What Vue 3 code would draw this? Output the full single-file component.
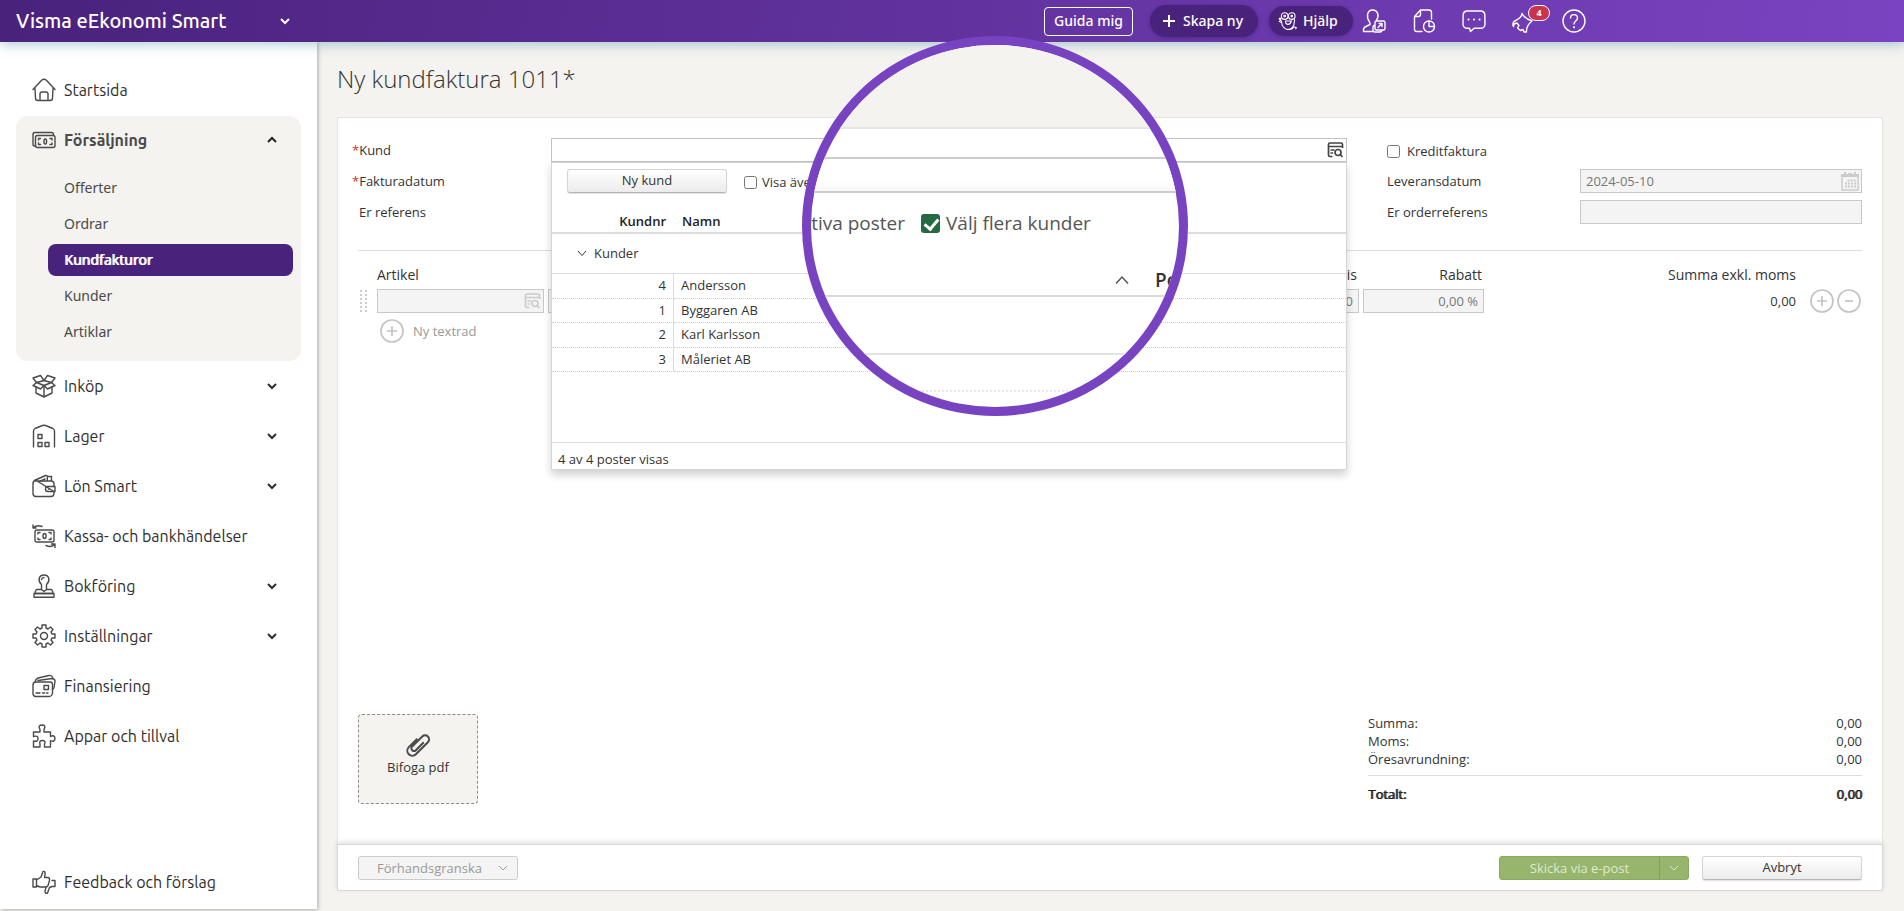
<script setup>
import { ref } from 'vue'

const subItems = ['Offerter', 'Ordrar', 'Kundfakturor', 'Kunder', 'Artiklar']
const activeItem = ref('Kundfakturor')

const menu = [
  { label: 'Inköp', icon: 'box', expandable: true },
  { label: 'Lager', icon: 'warehouse', expandable: true },
  { label: 'Lön Smart', icon: 'wallet', expandable: true },
  { label: 'Kassa- och bankhändelser', icon: 'cash', expandable: false },
  { label: 'Bokföring', icon: 'stamp', expandable: true },
  { label: 'Inställningar', icon: 'gear', expandable: true },
  { label: 'Finansiering', icon: 'cards', expandable: false },
  { label: 'Appar och tillval', icon: 'puzzle', expandable: false },
]

const icons = {
  home: ['M1 11.500 9.600 2.200Q12 .2 14.400 2.200L23 11.500M3 10.500 3.500 20Q3.500 22.500 6 22.500H18Q20.500 22.500 20.500 20L21 10.500', 'M8 22V16Q8 14 10 14H14Q16 14 16 16V22'],
  money: ['M3.500 18H2.500Q1 18 1 16.500V6.500Q1 4.500 3 4.500H19.500Q21.500 4.500 21.500 6.500', 'M5.500 7.500H21Q23 7.500 23 9.500V17.500Q23 19.500 21 19.500H5.500Q3.500 19.500 3.500 17.500V9.500Q3.500 7.500 5.500 7.500Z', 'M6.500 12V10.500H8.500M6.500 15V16.500H8.500M18 10.500H20V12M18 16.500H20V15', 'M13.300 11C11.500 11 11.500 16 13.300 16S15 11 13.300 11Z'],
  box: ['M4 12.500V19L12 23 20 19V12.500M12 12.500V23', 'M12 6.500 4.500 8.500 12 11.500 19.500 8.500Z', 'M4.500 8.500 1 11.500 8.500 15 12 11.500 15.500 15 23 11.500 19.500 8.500', 'M12 6.500 8.500 1.500 1 4 4.500 8.500M12 6.500 15.500 1.500 23 4 19.500 8.500'],
  warehouse: ['M1.500 23V7Q1.500 5.500 3 4.500L10.500 1.500Q12 1 13.500 1.500L21 4.500Q22.500 5.500 22.500 7V23', 'M6 10.500H10V14.500H6ZM6 18.500H10V22.500H6ZM13 18.500H17V22.500H13Z'],
  wallet: ['M3.500 7H19Q22 7 22 10V12.500M22 17.500V19Q22 22.500 19 22.500H4Q1 22.500 1 19.500V9.500Q1 7 3.500 6Z', 'M15.500 12.500H23V17.500H16Q13.500 17.500 13.500 15T15.500 12.500Z', 'M3.500 6 13.500 1.500Q15 1 15.300 2.500V6.500M16 2.500H19.500V6.500M8.500 6.800 13 5', 'M16.500 15H17'],
  cash: ['M5 6H20Q22 6 22 8V16Q22 18 20 18H5Q3 18 3 16V8Q3 6 5 6Z', 'M6 10V8.500H8M6 14V15.500H8M17 8.500H19V10M17 15.500H19V14', 'M12.500 9.500C10.500 9.500 10.500 14.500 12.500 14.500S14.500 9.500 12.500 9.500Z', 'M10 2.500Q5 .5 1.500 3.500M1 1V4H4', 'M14 21.500Q19 24 22.500 20.500M19.500 20H23V23.500'],
  stamp: ['M9.500 15.500V10.500C5.500 7 6.500 1 12 1S18.500 7 14.500 10.500V15.500', 'M9.500 15.500H5Q3.500 15.500 3 19.500H21Q20.500 15.500 19 15.500H14.500L12 17.500Z', 'M2 19.500H22V23.300H2Z', 'M9.500 5.500Q10 3.500 12 3.500'],
  gear: ['M10 1H14V4L16 5 18.500 3 21 5.500 19 8 20 10H23V14H20L19 16 21 18.500 18.500 21 16 19 14 20V23H10V20L8 19 5.500 21 3 18.500 5 16 4 14H1V10H4L5 8 3 5.500 5.500 3 8 5 10 4Z', 'M12 8.500A3.500 3.500 0 1 1 12 15.500 3.500 3.500 0 1 1 12 8.500Z'],
  cards: ['M4 8H18Q20.500 8 20.500 10.500V19Q20 22.500 17 22.500H4Q1 22.500 1 19.500V11Q1 8 4 8Z', 'M3 8Q3.500 5 6 4L17 1.500Q20 1 20.500 3.500L20.700 4.500M6 6.500 20 4.500Q23 4.500 23 7.500L22 13.500Q21.800 15 20.500 15.500', 'M12 11.500H16.500V15.500H12ZM4 19H8M10.500 19H12.500M14.500 19H16'],
  puzzle: ['M1.500 8H8V5.500C6 2.500 7.500 1 10 1S14 2.500 12 5.500V8H18.500V12.500C21 11 23 12 23 14.500S21 18 18.500 16.500V23H12.500V20C14 17.500 12.500 16.500 10.500 16.500S7 17.500 8 20V23H1.500V17C5 18 6 16.500 6 14.500S5 11.500 1.500 12.500Z'],
  feedback: ['M1 9H4.500V17H1ZM4.500 10 9 7 11 1.500C13.500 1 13.500 3 12.500 7.500H16Q18 8 17.500 10.500L16 15.500Q15.500 17 13.500 17H8L4.500 15.500', 'M20 10.500H23V16.500H20L17.500 17.500 15.500 23C13.500 24 12.500 22.500 13.500 19L14 17'],
}

const customers = [
  { id: 4, name: 'Andersson' },
  { id: 1, name: 'Byggaren AB' },
  { id: 2, name: 'Karl Karlsson' },
  { id: 3, name: 'Måleriet AB' },
]

const totals = ['Summa:', 'Moms:', 'Öresavrundning:']
</script>

<template>
  <div class="app">
    <header class="topbar">
      <button class="brand" type="button">
        <span>Visma eEkonomi Smart</span>
        <svg class="chev" viewBox="0 0 12 12"><path d="M2 4 6 8 10 4" /></svg>
      </button>
      <nav class="tools" aria-label="Verktyg">
        <button class="guide" type="button">Guida mig</button>
        <button class="pill create" type="button">
          <svg class="plus" viewBox="0 0 14 14"><path d="M7 1V13M1 7H13" /></svg>Skapa ny
        </button>
        <button class="pill help" type="button">
          <svg viewBox="0 0 24 24" class="owl">
            <circle cx="8" cy="6" r="4" /><circle cx="16.500" cy="6" r="4" />
            <circle cx="8" cy="6" r="1" /><circle cx="16.500" cy="6" r="1" />
            <path d="M1 9 4 12 5 17Q8 22 12 22T19 17L20 10M1 12 4 14M9 12H16Q15 16 12 16T9 12ZM12 22Q17 23 19 19L22 20 21 22M2 8 4 10" />
          </svg>Hjälp
        </button>
        <button class="tool" type="button" aria-label="Användare">
          <svg viewBox="0 0 24 24"><path d="M10.500 22.500H1.500Q1 18.500 4 17.500L8 15.500Q8.500 14.500 7.500 13C4 8 5 1 10.500 1S17.500 7 14.500 11" /><path d="M14.500 12H21.500Q23 12 23 13.500V19.500Q23 21 21.500 21H14.500Q13 21 13 19.500V13.500Q13 12 14.500 12ZM13 16Q11 16.500 11 18V21Q11 23 13 23H18Q19.500 23 20 21.500M16 18.500 20 14.500M17 14.500H20V17.500" /></svg>
        </button>
        <button class="tool" type="button" aria-label="Historik">
          <svg viewBox="0 0 24 24"><path d="M10 22.500H5Q2.500 22.500 2.500 20V7.500L8.500 1H17Q19.500 1 19.500 3.500V10M2.500 7.500H6.500Q8.500 7.500 8.500 5.500V1" /><circle cx="17" cy="17.500" r="5.500" /><path d="M17 12V17.500H22.500" /></svg>
        </button>
        <button class="tool" type="button" aria-label="Meddelanden">
          <svg viewBox="0 0 24 24"><path d="M4.500 2H19.500Q22.500 2.500 22.800 5.500L23 15.500Q22.500 19 19.500 19.200H12L8.500 22.500 7.500 19.200H4.500Q1.500 19 1 15.500L1.200 5.500Q1.500 2.500 4.500 2Z" /><path class="dots" d="M6.500 10.500H6.600M12 10.500H12.100M17.500 10.500H17.600" /></svg>
        </button>
        <button class="tool alerts" type="button" aria-label="Nyheter">
          <svg viewBox="0 0 24 24"><path d="M10 4.500C10 8 7 10 2 12.500Q0 15 1.500 17.500M1.500 17.500 2 15 5 14 7 16.500 5.500 19 8.500 21.500 11 20.500 12 23H14.500Q14 17 20 12M10 4.500Q13 10 20 12" /></svg>
          <span class="badge">4</span>
        </button>
        <button class="tool" type="button" aria-label="Hjälpcenter">
          <svg viewBox="0 0 24 24"><circle cx="12" cy="12" r="11" /><path d="M8.500 9C8.500 4.500 15.500 4.500 15.500 9 15.500 12 12 12 12 15" /><path class="dots" d="M12 18.300H12.100" /></svg>
        </button>
      </nav>
    </header>

    <div class="body">
      <aside class="sidebar">
        <a class="item" href="#"><svg viewBox="0 0 24 24"><path v-for="d in icons.home" :key="d" :d="d" /></svg><span>Startsida</span></a>
        <section class="group">
          <a class="item open" href="#">
            <svg viewBox="0 0 24 24"><path v-for="d in icons.money" :key="d" :d="d" /></svg><span>Försäljning</span>
            <svg class="chev" viewBox="0 0 12 12"><path d="M2 8 6 4 10 8" /></svg>
          </a>
          <ul>
            <li v-for="s in subItems" :key="s">
              <a href="#" :class="{ active: s === activeItem }" @click.prevent="activeItem = s">{{ s }}</a>
            </li>
          </ul>
        </section>
        <a v-for="m in menu" :key="m.label" class="item" href="#">
          <svg viewBox="0 0 24 24"><path v-for="d in icons[m.icon]" :key="d" :d="d" /></svg><span>{{ m.label }}</span>
          <svg v-if="m.expandable" class="chev" viewBox="0 0 12 12"><path d="M2 4 6 8 10 4" /></svg>
        </a>
        <a class="item feedback" href="#"><svg viewBox="0 0 24 24"><path v-for="d in icons.feedback" :key="d" :d="d" /></svg><span>Feedback och förslag</span></a>
      </aside>

      <main class="main">
        <h1>Ny kundfaktura 1011*</h1>
        <form class="sheet" @submit.prevent>
          <div class="content">
            <div class="fields">
              <label for="kund"><i>*</i>Kund</label>
              <div class="picker">
                <input id="kund" type="text" />
                <svg class="lookup" viewBox="0 0 16 16"><path d="M5 14.500H2.500Q1 14.500 1 13V2.500Q1 1 2.500 1H13.500Q15 1 15 2.500V6M1 4.500H15M3 8H7M3 11H5.500" /><circle cx="10.500" cy="10.500" r="3" /><path d="M13 13 15 15" /></svg>
                <div class="dropdown">
                  <div class="drop-tools">
                    <button class="btn" type="button">Ny kund</button>
                    <label class="check"><input type="checkbox" />Visa även</label>
                  </div>
                  <table class="customers">
                    <colgroup><col class="nr" /><col /></colgroup>
                    <thead><tr><th class="num">Kundnr</th><th>Namn</th></tr></thead>
                    <tbody>
                      <tr class="section"><td colspan="2"><svg viewBox="0 0 12 12"><path d="M2 4 6 8.500 10 4" /></svg>Kunder</td></tr>
                      <tr v-for="c in customers" :key="c.id" class="row"><td class="num">{{ c.id }}</td><td>{{ c.name }}</td></tr>
                    </tbody>
                  </table>
                  <p class="count">4 av 4 poster visas</p>
                </div>
              </div>
              <label class="check credit"><input type="checkbox" />Kreditfaktura</label>

              <label for="fakturadatum"><i>*</i>Fakturadatum</label>
              <input id="fakturadatum" type="text" />
              <label class="right" for="leverans">Leveransdatum</label>
              <div class="date">
                <input id="leverans" type="text" value="2024-05-10" disabled />
                <svg viewBox="0 0 18 20"><path class="frame" d="M1 5V19H17V5" /><path class="rings" d="M0 3H3V1H5V3H7V2H11V3H13V1H15V3H18V6H0Z" /><path class="days" d="M6.500 9.500H15M4 12.500H15M4 15.500H15" /></svg>
              </div>

              <label for="referens">Er referens</label>
              <input id="referens" type="text" />
              <label class="right" for="order">Er orderreferens</label>
              <input id="order" type="text" disabled />
            </div>

            <table class="lines">
              <colgroup><col class="c-drag" /><col class="c-art" /><col /><col class="c-price" /><col class="c-disc" /><col class="c-sum" /><col class="c-act" /></colgroup>
              <thead>
                <tr><th></th><th>Artikel</th><th></th><th class="r">Pris</th><th class="r">Rabatt</th><th class="r sum">Summa exkl. moms</th><th></th></tr>
              </thead>
              <tbody>
                <tr>
                  <td><svg class="drag" viewBox="0 0 8 24"><path d="M2 1V24M7 1V24" /></svg></td>
                  <td>
                    <div class="article">
                      <input type="text" aria-label="Artikel" disabled />
                      <svg class="lookup" viewBox="0 0 16 16"><path d="M5 14.500H2.500Q1 14.500 1 13V2.500Q1 1 2.500 1H13.500Q15 1 15 2.500V6M1 4.500H15M3 8H7M3 11H5.500" /><circle cx="10.500" cy="10.500" r="3" /><path d="M13 13 15 15" /></svg>
                    </div>
                  </td>
                  <td><input type="text" aria-label="Benämning" disabled /></td>
                  <td><input class="r" type="text" aria-label="Pris" value="0,00" disabled /></td>
                  <td><input class="r" type="text" aria-label="Rabatt" value="0,00 %" disabled /></td>
                  <td class="r sum">0,00</td>
                  <td>
                    <div class="acts">
                      <button class="round" type="button" aria-label="Lägg till rad"><svg viewBox="0 0 24 24"><circle cx="12" cy="12" r="11" /><path d="M7 12H17M12 7V17" /></svg></button>
                      <button class="round" type="button" aria-label="Ta bort rad"><svg viewBox="0 0 24 24"><circle cx="12" cy="12" r="11" /><path d="M8 12H16" /></svg></button>
                    </div>
                  </td>
                </tr>
              </tbody>
            </table>
            <button class="textrow" type="button">
              <svg viewBox="0 0 24 24"><circle cx="12" cy="12" r="11" /><path d="M7 12H17M12 7V17" /></svg>Ny textrad
            </button>

            <div class="bottom">
              <button class="attach" type="button">
                <svg viewBox="0 0 24 26"><g transform="rotate(45 12 13)"><path d="M7 9V21A5 5 0 0 0 17 21V4A4 4 0 0 0 9 4V19A2.800 2.800 0 0 0 14.200 19V7" /></g></svg>
                Bifoga pdf
              </button>
              <dl class="totals">
                <div v-for="t in totals" :key="t"><dt>{{ t }}</dt><dd>0,00</dd></div>
                <div class="total"><dt>Totalt:</dt><dd>0,00</dd></div>
              </dl>
            </div>
          </div>

          <footer class="actions">
            <button class="btn preview" type="button" disabled>Förhandsgranska<svg viewBox="0 0 12 12"><path d="M2 4 6 8 10 4" /></svg></button>
            <div class="send">
              <button class="send-main" type="button">Skicka via e-post</button>
              <button class="send-more" type="button" aria-label="Fler alternativ"><svg viewBox="0 0 12 12"><path d="M2 4 6 8 10 4" /></svg></button>
            </div>
            <button class="btn" type="button">Avbryt</button>
          </footer>
        </form>
      </main>
    </div>

    <div class="lens">
      <div class="l-page"></div>
      <div class="l-field"></div>
      <div class="l-gap"></div>
      <div class="l-tools">
        <span class="l-left">tiva poster</span>
        <label><input type="checkbox" checked />Välj flera kunder</label>
      </div>
      <div class="l-head"><svg viewBox="0 0 14 10"><path d="M1 8.500 7 2 13 8.500" /></svg><b>Po</b></div>
      <div class="l-section"></div>
      <div class="l-row"></div>
    </div>
  </div>
</template>

<style>
html,
body {
  background: #f4f3ef;
}
</style>

<style scoped>
* {
  box-sizing: border-box;
}
.app {
  position: relative;
  display: flex;
  flex-direction: column;
  min-height: 100vh;
  font: 13px/18px 'Open Sans', 'Noto Sans', sans-serif;
  color: #333;
}
button,
input {
  font: inherit;
  color: inherit;
}
button {
  margin: 0;
  padding: 0;
  border: 0;
  background: none;
  cursor: pointer;
}
svg {
  flex: none;
  fill: none;
  stroke: currentColor;
}
a {
  color: inherit;
  text-decoration: none;
}

/* Top bar */
.topbar {
  position: relative;
  z-index: 3;
  display: flex;
  justify-content: space-between;
  align-items: center;
  height: 42px;
  padding: 0 318px 0 16px;
  color: #fff;
  background: linear-gradient(100deg, #49227c 0%, #7a43c1 100%);
  box-shadow: 0 2px 12px rgba(40, 120, 150, 0.4);
  font-family: 'Noto Sans', sans-serif;
}
.brand {
  display: flex;
  justify-content: space-between;
  align-items: center;
  width: 275px;
  font: 500 20px/26px Ubuntu, 'Noto Sans', sans-serif;
}
.chev {
  width: 12px;
  height: 12px;
  stroke-width: 2;
}
.tools {
  display: flex;
  align-items: center;
}
.guide {
  width: 89px;
  height: 29px;
  border: 1px solid #fff;
  border-radius: 4px;
  font-size: 14px;
  font-weight: 500;
}
.pill {
  display: flex;
  align-items: center;
  border-radius: 16px;
  background: #49227c;
  box-shadow: 0 1px 4px rgba(40, 10, 80, 0.3);
  font-size: 14px;
  font-weight: 500;
  white-space: nowrap;
}
.create {
  gap: 7px;
  width: 108px;
  height: 32px;
  margin-left: 17px;
  padding-left: 12px;
}
.plus {
  width: 14px;
  height: 14px;
  stroke-width: 2;
}
.help {
  gap: 5px;
  width: 84px;
  height: 30px;
  margin: 0 9px 0 11px;
  padding-left: 9px;
}
.owl {
  width: 20px;
  height: 22px;
  stroke-width: 1.300;
}
.tool {
  position: relative;
  width: 24px;
  height: 24px;
  margin-right: 26px;
}
.tool:last-child {
  margin-right: 0;
}
.tool svg {
  display: block;
  width: 24px;
  height: 24px;
  stroke-width: 1.400;
  stroke-linecap: round;
  stroke-linejoin: round;
}
.tool .dots {
  stroke-width: 2;
}
.badge {
  position: absolute;
  left: 16px;
  top: -4px;
  width: 22px;
  height: 16px;
  border: 1px solid #fff;
  border-radius: 8px;
  background: #c9344c;
  font-size: 9px;
  font-weight: 700;
  line-height: 14px;
}

/* Layout */
.body {
  display: flex;
  flex: 1;
}
.sidebar {
  display: flex;
  flex-direction: column;
  flex: none;
  width: 317px;
  margin-bottom: 2px;
  padding: 23px 16px 2px;
  background: #fff;
  box-shadow: 1px 1px 4px rgba(0, 0, 0, 0.3);
}
.item {
  display: flex;
  align-items: center;
  height: 50px;
  padding: 0 23px 0 16px;
  font: 16px/22px Ubuntu, 'Noto Sans', sans-serif;
  color: #2e2e2e;
}
.item > svg:first-child {
  width: 24px;
  height: 24px;
  margin-right: 8px;
  stroke: #4a4a4a;
  stroke-width: 1.400;
  stroke-linejoin: round;
  stroke-linecap: round;
}
.item > span {
  flex: 1;
  white-space: nowrap;
}
.group {
  margin: 1px 0 0;
  padding-bottom: 11px;
  border-radius: 12px;
  background: #f4f3ef;
}
.open {
  height: 48px;
  font-weight: 700;
  color: #4a4a4a;
}
.open .chev {
  color: #222;
}
.group ul {
  margin: 6px 0 0;
  padding: 0 8px 0 32px;
  list-style: none;
}
.group li {
  padding: 2px 0;
}
.group li a {
  display: block;
  padding: 6px 16px;
  border-radius: 8px;
  font: 14px/20px 'Noto Sans', sans-serif;
  color: #4a4a4a;
}
.group li a.active {
  background: #49227c;
  color: #fff;
  text-shadow: 1px 0 currentColor;
}
.feedback {
  margin-top: auto;
}
.main {
  display: flex;
  flex-direction: column;
  flex: 1;
  min-width: 0;
  padding: 20px 21px 20px 20px;
}
h1 {
  margin: 0 0 21px;
  font-size: 24px;
  font-weight: 300;
  line-height: 34px;
}
.sheet {
  display: flex;
  flex-direction: column;
  flex: 1;
  margin: 0;
}
.content {
  display: flex;
  flex-direction: column;
  flex: 1;
  padding: 20px 20px 40px;
  border: 1px solid #e3e3e1;
  border-bottom: 0;
  background: #fff;
}
.fields {
  display: grid;
  grid-template-columns: 193px minmax(0, 796fr) 233px minmax(0, 282fr);
  grid-auto-rows: 24px;
  row-gap: 7px;
  align-items: center;
  padding-bottom: 26px;
  border-bottom: 1px solid #ddd;
}
.fields > label {
  padding-left: 1px;
}
.fields i {
  margin-left: -7px;
  color: #d03030;
  font-style: normal;
}
.fields > .right,
.fields > .credit {
  margin-left: 40px;
  padding-left: 0;
}
.fields > .credit {
  padding-top: 2px;
}
input[type='text'] {
  display: block;
  width: 100%;
  height: 24px;
  padding: 0 5px;
  border: 1px solid #c2c2c2;
  border-radius: 0;
  background: #fff;
}
input[type='text']:disabled {
  background: #f4f4f4;
  border-color: #c8c8c8;
  color: #777;
}
input[type='checkbox'] {
  width: 13px;
  height: 13px;
  margin: 0;
}
.check {
  display: flex;
  align-items: center;
}
.credit {
  grid-column: span 2;
  gap: 7px;
}
.picker,
.date,
.article {
  position: relative;
}
.lookup {
  position: absolute;
  right: 3px;
  top: 4px;
  width: 17px;
  height: 16px;
  color: #444;
  stroke-width: 1.700;
}
.article .lookup {
  color: #ccc;
}
.date svg {
  position: absolute;
  right: 3px;
  top: 2px;
  width: 18px;
  height: 20px;
  color: #ccc;
}
.frame {
  stroke-width: 1.500;
}
.rings {
  fill: currentColor;
  stroke: none;
}
.days {
  stroke-width: 2;
  stroke-dasharray: 2 1;
}

/* Customer dropdown */
.dropdown {
  position: absolute;
  z-index: 2;
  top: 100%;
  left: 0;
  right: 0;
  display: flex;
  flex-direction: column;
  height: 308px;
  border: 1px solid #d5d5d5;
  background: #fff;
  box-shadow: 0 5px 8px rgba(0, 0, 0, 0.18);
}
.drop-tools {
  display: flex;
  align-items: center;
  gap: 17px;
  padding: 6px 15px 0;
}
.drop-tools .check {
  gap: 5px;
  padding-top: 2px;
}
.btn {
  width: 160px;
  height: 24px;
  padding-bottom: 2px;
  border: 1px solid #d5d5d5;
  border-bottom-color: #b5b5b5;
  border-radius: 3px;
  background: linear-gradient(#fff, #ececec);
  box-shadow: 0 1px 1px rgba(0, 0, 0, 0.12);
}
.customers {
  width: 100%;
  margin-top: 14px;
  border-collapse: separate;
  border-spacing: 0;
  table-layout: fixed;
}
.nr {
  width: 122px;
}
.customers th {
  height: 27px;
  padding: 3px 8px 0;
  border-bottom: 2px solid #ddd;
  text-align: left;
  font-size: 13px;
  font-weight: 600;
  color: #222;
}
.customers .num {
  text-align: right;
}
.section td {
  height: 40px;
  padding: 0 0 2px 24px;
  border-bottom: 1px solid #ddd;
}
.section svg {
  width: 12px;
  height: 12px;
  margin-right: 6px;
  vertical-align: -1px;
}
.row td {
  height: 24px;
  padding: 0 7px 2px;
  border-bottom: 1px dotted #d0d0d0;
}
.row:nth-child(even) td {
  height: 25px;
}
.row .num {
  padding-right: 7px;
  border-right: 1px solid #ddd;
}
.count {
  margin: auto 0 0;
  padding: 7px 6px 0;
  height: 27px;
  border-top: 1px solid #ddd;
}

/* Invoice lines */
.lines {
  width: 100%;
  margin-top: 13px;
  border-collapse: collapse;
  table-layout: fixed;
}
.c-drag {
  width: 19px;
}
.c-art {
  width: 171px;
}
.c-price,
.c-disc {
  width: 125px;
}
.c-sum {
  width: 308px;
}
.c-act {
  width: 66px;
}
.lines th {
  height: 25px;
  padding: 0 0 3px;
  text-align: left;
  font-size: 14px;
  line-height: 20px;
  font-weight: 400;
}
.lines td {
  height: 24px;
  padding: 0 4px 0 0;
}
.lines .r {
  text-align: right;
}
.lines th.r {
  padding-right: 6px;
}
.lines .sum,
.lines th.sum {
  padding-right: 0;
}
.drag {
  display: block;
  width: 8px;
  height: 24px;
  margin-left: 1px;
  stroke: #ccc;
  stroke-width: 2;
  stroke-dasharray: 2 2;
}
.lines td:last-child {
  padding: 0;
}
.acts {
  display: flex;
  justify-content: flex-end;
  gap: 3px;
  padding-right: 1px;
}
.round,
.round svg {
  display: block;
  width: 24px;
  height: 24px;
}
.round svg,
.textrow svg {
  stroke: #c4c4c4;
  stroke-width: 1.700;
}
.textrow {
  display: flex;
  align-items: center;
  align-self: flex-start;
  gap: 9px;
  margin: 6px 0 0 22px;
  color: #999;
}
.textrow svg {
  width: 24px;
  height: 24px;
}

/* Attachment and totals */
.bottom {
  display: flex;
  justify-content: space-between;
  align-items: flex-end;
  margin-top: auto;
}
.attach {
  display: flex;
  flex-direction: column;
  align-items: center;
  justify-content: center;
  width: 120px;
  height: 90px;
  padding-bottom: 10px;
  border: 1px dashed #8a8a8a;
  border-radius: 4px;
  background: #f4f3ef;
}
.attach svg {
  width: 24px;
  height: 26px;
  color: #4a4a4a;
  stroke-width: 2;
}
.totals {
  width: 494px;
  margin: 0;
}
.totals div {
  display: flex;
  justify-content: space-between;
}
.totals dd {
  margin: 0;
}
.totals .total {
  margin-top: 7px;
  padding: 9px 0 1px;
  border-top: 1px solid #ddd;
  color: #222;
  text-shadow: 1px 0 currentColor;
}

/* Actions */
.actions {
  display: flex;
  align-items: center;
  height: 47px;
  padding: 0 20px;
  border: 1px solid #d8d8d8;
  background: #fff;
  box-shadow: 0 -2px 5px rgba(0, 0, 0, 0.12);
}
.preview {
  display: flex;
  align-items: center;
  justify-content: space-between;
  margin-right: auto;
  padding: 0 8px 0 18px;
  border-color: #ccc;
  background: #f4f4f4;
  box-shadow: none;
  color: #9a9a9a;
}
.actions svg {
  width: 12px;
  height: 12px;
}
.send {
  display: flex;
  height: 24px;
  margin-right: 13px;
  border: 1px solid #8aab5f;
  border-radius: 3px;
  background: #97b56c;
  color: #dfead0;
}
.send-main {
  width: 160px;
  border-right: 1px solid #7f9e58;
}
.send-more {
  display: flex;
  align-items: center;
  justify-content: center;
  width: 28px;
}

/* Magnified detail over the page */
.lens {
  position: absolute;
  z-index: 5;
  left: 802px;
  top: 36px;
  width: 386px;
  height: 380px;
  overflow: hidden;
  border: 9px solid #7843c0;
  border-radius: 50%;
  background: #fff;
  font-size: 19px;
  line-height: 26px;
  color: #555;
}
.l-page {
  height: 84px;
  border-bottom: 2px solid #e6e6e4;
  background: #f4f3ef;
}
.l-field {
  height: 30px;
  border-bottom: 2px solid #ccc;
}
.l-gap {
  height: 34px;
  border-bottom: 2px solid #ccc;
  background: linear-gradient(#fff 70%, #f6f6f6);
}
.l-tools {
  display: flex;
  align-items: center;
  height: 60px;
}
.l-left {
  flex: none;
  width: 94px;
  text-align: right;
  white-space: nowrap;
}
.l-tools label {
  display: flex;
  align-items: center;
  gap: 6px;
  margin-left: 16px;
  white-space: nowrap;
}
.l-tools input {
  position: relative;
  appearance: none;
  width: 19px;
  height: 19px;
  border-radius: 3px;
  background: #24693f;
}
.l-tools input::after {
  content: '';
  position: absolute;
  left: 6px;
  top: 2px;
  width: 6px;
  height: 11px;
  border: solid #fff;
  border-width: 0 3px 3px 0;
  transform: rotate(40deg);
}
.l-head {
  display: flex;
  align-items: center;
  gap: 26px;
  height: 44px;
  padding: 11px 0 0 304px;
  border-bottom: 2px solid #d8d8d8;
}
.l-head svg {
  width: 14px;
  height: 10px;
  stroke-width: 1.500;
}
.l-head b {
  font-weight: 600;
  color: #333;
}
.l-section {
  height: 58px;
  border-bottom: 2px solid #e3e3e3;
}
.l-row {
  height: 37px;
  border-bottom: 2px dotted #e8e8e8;
}
</style>
